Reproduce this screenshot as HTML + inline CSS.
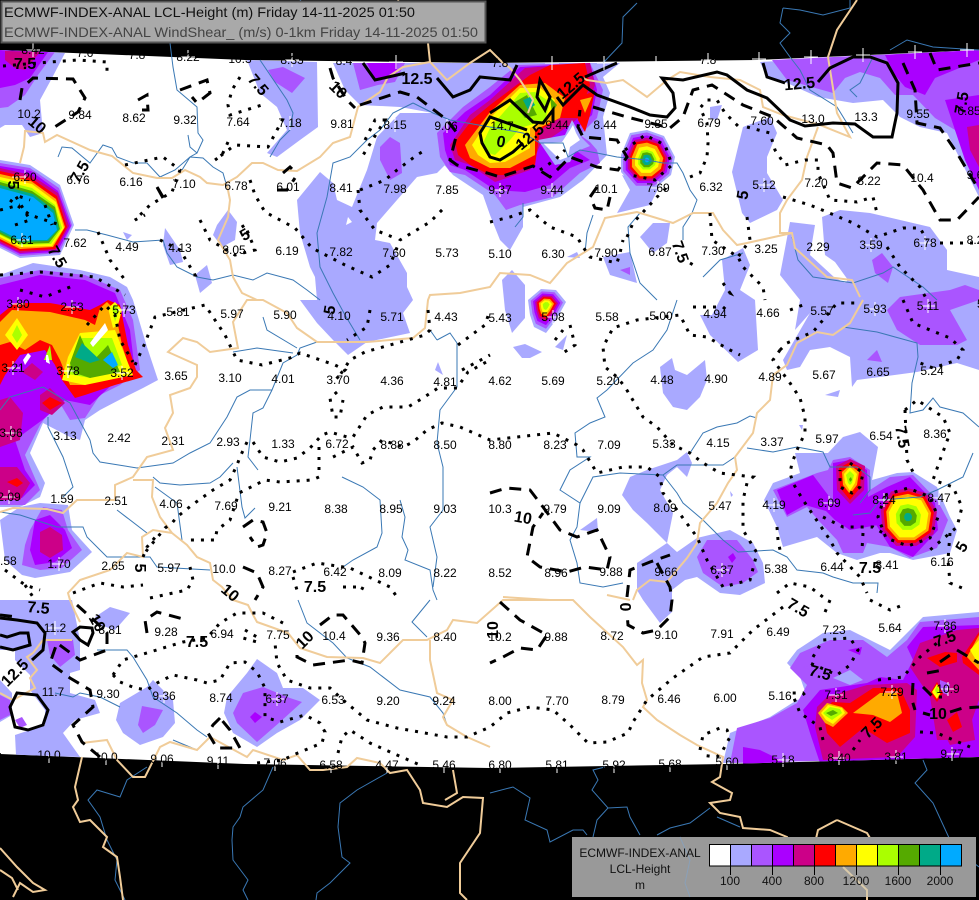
<!DOCTYPE html>
<html><head><meta charset="utf-8"><title>ECMWF-INDEX-ANAL LCL-Height</title>
<style>
html,body{margin:0;padding:0;background:#000;width:979px;height:900px;overflow:hidden}
svg{display:block}
text{font-family:"Liberation Sans",sans-serif}
.l text{font-size:12px;fill:#000;text-anchor:middle}
.b text{font-size:16px;font-weight:bold;fill:#000;text-anchor:middle}
.riv{fill:none;stroke:#3a78b4;stroke-width:1}
.bor{fill:none;stroke:#f0cc99;stroke-width:2}
.dot{fill:none;stroke:#000;stroke-width:3;stroke-dasharray:3 7}
.das{fill:none;stroke:#000;stroke-width:3;stroke-dasharray:12 8}
.sol{fill:none;stroke:#000;stroke-width:3}
</style></head><body>
<svg xmlns="http://www.w3.org/2000/svg" width="979" height="900" viewBox="0 0 979 900">
<defs>
<clipPath id="map"><polygon points="0,50 245,60 490,63 757,60 979,50 979,757 725,764 490,768 245,764 0,754"/></clipPath>
<polygon id="o1" points="-26,-5 -17,-27 0,-30 17,-24 28,-3 24,15 8,28 -12,28 -26,12"/>
<polygon id="o2" points="-18,-5 -5,-16 10,-15 20,-3 10,15 0,28 -12,22 -16,10"/>
<polygon id="o3" points="-32,-8 -20,-30 0,-34 22,-28 34,-6 30,20 10,34 -14,34 -30,16"/>
</defs>
<rect width="979" height="900" fill="#000"/>
<polygon points="0,50 245,60 490,63 757,60 979,50 979,757 725,764 490,768 245,764 0,754" fill="#fff"/>

<g clip-path="url(#map)">
<g fill="#a9a9ff">
<polygon points="0,50 65,53 52,78 40,100 43,133 30,137 22,125 5,125 0,128"/>
<polygon points="247,60 317,62 318,127 300,140 277,157 267,153 287,130 277,107 260,93"/>
<polygon points="297,200 320,172 333,183 337,200 352,207 367,170 377,137 400,113 440,113 445,165 437,173 417,177 377,223 375,240 390,243 407,273 407,287 413,300 403,313 410,333 367,342 348,355 333,340 317,323 300,300 317,300 315,277 310,267 300,233"/>
<polygon points="333,63 620,63 603,77 610,93 603,117 607,155 583,180 560,197 523,207 523,227 510,250 500,240 490,215 483,195 453,175 440,160 437,143 433,113 400,107 360,105 345,90"/>
<polygon points="165,228 180,250 183,262 170,265 163,245"/>
<polygon points="195,275 207,265 212,283 200,293"/>
<polygon points="217,225 228,210 237,222 235,240 222,247 213,235"/>
<polygon points="123,232 132,235 127,240"/>
<polygon points="438,362 443,375 435,370"/>
<polygon points="622,175 630,190 617,213 650,205 660,185"/>
<polygon points="743,127 770,117 777,133 767,157 767,173 783,200 777,210 750,223 742,213 732,172 738,147"/>
<polygon points="760,62 767,77 787,83 818,97 853,103 883,100 900,117 920,127 947,133 979,197 979,50"/>
<polygon points="710,107 722,105 717,120 710,118"/>
<polygon points="640,237 653,223 670,223 667,243 653,253"/>
<polygon points="567,257 577,252 580,258"/>
<polygon points="603,257 630,252 637,283 610,275"/>
<polygon points="822,217 840,210 870,213 930,227 947,250 947,270 979,277 979,370 957,363 917,372 857,380 852,387 850,357 830,347 810,350 800,367 787,370 783,360 810,313 837,290 848,280 835,262 825,255"/>
<polygon points="790,222 815,225 810,255 835,278 850,285 840,300 810,313 795,330 800,300 780,275"/>
<polygon points="722,260 743,248 750,265 740,290 755,300 758,350 738,362 710,335 700,315 712,315 725,290"/>
<polygon points="660,367 672,358 675,370 687,375 705,360 707,380 700,397 687,410 673,407 663,393"/>
<polygon points="502,280 512,270 525,285 525,318 512,333 505,310"/>
<polygon points="513,347 525,344 542,352 530,358 522,358"/>
<polygon points="555,347 567,335 563,350"/>
<polygon points="647,470 677,460 687,452 692,463 687,477 677,467 667,475 660,490 673,513 667,543 647,523 633,510 622,495 630,477"/>
<polygon points="637,563 667,543 677,552 697,538 730,530 753,543 763,563 765,583 740,595 720,593 697,577 685,580 672,590 672,612 660,623 643,600 637,590"/>
<polygon points="730,491 733,495 731,497"/>
<polygon points="799,425 803,425 802,430"/>
<polygon points="825,395 840,390 838,397"/>
<polygon points="580,530 597,518 598,532"/>
<polygon points="795,453 828,453 843,437 860,432 878,447 872,480 897,473 913,472 937,487 950,517 957,530 950,553 913,560 890,553 880,553 857,560 837,553 817,537 783,547 777,527 764,500 773,483 800,473"/>
<polygon points="787,663 797,650 823,633 850,630 890,650 923,617 979,612 979,757 723,763 730,733 770,717 797,700 807,697 800,677"/>
<polygon points="0,275 33,263 80,270 110,277 127,287 133,300 147,347 158,380 143,388 123,398 100,410 85,420 80,440 70,437 43,423 30,453 45,483 40,497 20,507 0,507"/>
<polygon points="40,503 68,505 72,530 92,552 70,572 35,578 22,575 5,560 0,520 20,507"/>
<polygon points="0,600 72,600 75,615 80,640 80,670 70,673 70,693 95,700 100,713 75,720 63,733 80,757 16,755 15,735 45,725 45,710 30,690 30,675 15,660 15,650 0,650"/>
<polygon points="0,680 12,693 12,715 0,722"/>
<polygon points="95,617 110,607 130,613 115,630 100,625"/>
<polygon points="153,680 173,700 175,723 163,737 140,745 123,733 116,720 120,703 147,687"/>
<polygon points="257,659 277,673 283,688 303,688 320,700 300,720 277,733 257,747 233,733 224,713 227,697 247,673"/>
<polygon points="0,160 30,165 60,185 74,225 60,255 20,258 0,248"/>
</g>
<g fill="#fff">
<polygon points="348,217 352,222 346,225"/>
<polygon points="15,275 22,283 28,289 10,289"/>
</g>
<g fill="#aa55ff">
<polygon points="0,50 55,52 38,75 25,95 8,107 0,108"/>
<polygon points="268,70 283,67 305,78 292,93 275,82"/>
<polygon points="380,147 390,137 400,143 402,173 390,180 380,160"/>
<polygon points="353,63 405,63 395,82 378,85 360,90"/>
<polygon points="440,157 437,133 463,107 490,87 517,65 590,63 603,90 597,118 580,135 590,142 597,150 600,163 580,173 553,197 520,205 506,210 495,195 465,175 450,172"/>
<polygon points="772,60 787,80 833,93 845,78 860,72 880,78 895,95 913,95 935,118 955,130 979,190 979,50"/>
<polygon points="620,270 630,267 630,275"/>
<polygon points="872,260 882,253 893,267 888,283 875,273"/>
<polygon points="887,310 900,297 950,290 965,285 979,290 979,300 950,310 967,340 957,345 920,345 897,330"/>
<polygon points="867,360 877,350 882,362"/>
<polygon points="0,278 40,270 85,275 120,290 133,320 140,370 120,385 100,395 85,418 70,420 58,400 40,425 25,455 40,490 25,505 0,505"/>
<polygon points="43,507 62,510 68,530 82,550 62,568 40,570 22,565 25,545 30,530"/>
<polygon points="47,640 73,640 75,655 60,667 50,655"/>
<polygon points="0,695 10,700 10,715 0,720"/>
<polygon points="15,720 22,717 27,725 20,728"/>
<polygon points="142,706 163,710 155,725 143,733 138,725"/>
<polygon points="263,687 290,698 302,702 280,722 257,742 237,723 233,713 243,693"/>
<polygon points="697,557 707,540 737,540 753,560 758,572 743,583 723,587 703,573"/>
<polygon points="773,490 817,473 828,470 833,460 850,457 870,470 870,490 890,477 913,475 937,500 948,520 937,548 910,558 890,547 867,543 863,553 843,553 837,540 818,520 807,507 787,517"/>
<polygon points="790,668 800,653 830,640 863,640 887,657 907,640 920,622 979,617 979,757 730,763 737,728 770,718 797,703 807,685"/>
<polygon points="0,163 30,168 59,188 72,225 59,253 20,256 0,246"/>
</g>
<polygon points="833,678 850,670 863,680 850,685" fill="#a9a9ff"/>
<g fill="#aa00ff">
<polygon points="0,50 48,52 30,78 15,85 0,88"/>
<polygon points="367,63 397,63 397,73 375,80"/>
<polygon points="445,150 443,133 465,112 490,95 520,67 590,63 597,90 592,115 575,130 565,135 555,142 575,150 590,160 570,168 550,185 525,192 495,190 465,170 450,165"/>
<polygon points="885,55 895,75 905,87 925,95 935,78 979,60 979,50"/>
<polygon points="945,100 979,95 979,190 965,160 955,130"/>
<polygon points="0,285 40,275 85,280 115,293 130,330 135,372 115,382 90,405 65,400 45,418 15,440 25,470 35,485 22,498 0,498"/>
<polygon points="35,520 50,515 65,530 72,548 55,562 35,565 30,550"/>
<polygon points="250,717 255,712 262,717 255,723"/>
<polygon points="728,557 733,553 736,558 732,563"/>
<polygon points="833,513 833,463 850,460 867,470 868,497 887,487 910,477 935,503 938,530 913,557 890,547 875,523 850,530 835,520"/>
<polygon points="777,490 813,475 828,495 833,513 805,505 787,515"/>
<polygon points="820,505 870,500 878,525 850,530 835,520"/>
<polygon points="803,710 820,690 867,683 880,677 903,680 913,660 907,647 923,627 979,625 979,757 820,763 810,733"/>
<polygon points="743,747 760,750 787,763 743,765"/>
<polygon points="0,166 31,171 58,191 71,226 57,252 20,254 0,244"/>
</g>
<g fill="#aa55ff"><polygon points="803,667 823,663 810,670"/></g>
<g fill="#aa00ff"><polygon points="848,650 862,647 860,655"/></g>
<g fill="#cc0088">
<polygon points="5,51 40,52 25,70 15,68 5,60"/>
<polygon points="450,145 470,115 490,100 525,68 590,63 595,85 585,112 570,125 540,145 530,170 495,182 470,165 455,160"/>
<polygon points="967,127 979,125 979,167 970,150"/>
<polygon points="0,400 10,397 23,413 20,440 0,447"/>
<polygon points="0,467 17,467 30,483 20,500 0,500"/>
<polygon points="22,372 32,363 43,372 35,380"/>
<polygon points="40,532 50,527 62,535 63,550 50,558 40,552"/>
<polygon points="817,707 827,697 867,685 907,683 917,690 915,737 897,757 823,760 815,727"/>
<polygon points="920,643 957,630 979,628 979,700 965,740 937,740 930,697 910,667"/>
<polygon points="0,168 31,175 58,193 69,226 56,250 20,253 0,243"/>
<polygon points="40,395 50,388 65,403 52,415 40,410"/>
</g>
<polygon points="940,680 950,684 948,695 940,692" fill="#aa55ff"/>
<polygon points="950,700 970,705 975,740 950,745 940,725" fill="#cc0088"/>
<g fill="#f00">
<polygon points="455,142 472,120 490,105 530,75 550,65 585,63 590,85 578,118 560,118 540,130 535,165 505,175 490,175 470,165 458,155"/>
<polygon points="575,100 595,90 590,115 585,132 578,120"/>
<polygon points="0,315 15,303 50,303 90,310 100,305 108,300 120,305 128,345 136,370 143,377 115,385 85,395 75,398 62,380 55,365 45,350 20,355 5,375 0,385"/>
<polygon points="42,403 50,397 62,403 50,410"/>
<polygon points="823,713 832,702 850,703 873,688 900,688 910,710 910,733 887,743 863,728 840,747 827,733"/>
<polygon points="927,658 945,652 957,653 957,662 940,667"/>
<polygon points="962,657 979,632 979,675 963,663"/>
<polygon points="947,720 957,712 962,727 953,732"/>
<polygon points="930,693 937,682 943,693 937,702"/>
<polygon points="0,171 31,178 57,196 67,227 55,249 20,251 0,241"/>
</g>
<g fill="#fa0">
<polygon points="465,145 490,112 520,85 545,83 565,98 560,118 535,130 535,155 510,168 490,168 470,158"/>
<polygon points="580,100 592,97 585,113"/>
<polygon points="0,322 12,310 50,312 85,320 95,325 100,308 107,302 115,310 122,345 130,370 85,385 70,385 60,360 52,345 40,340 25,350 10,342 0,345"/>
<polygon points="853,713 880,693 897,693 902,713 890,722 873,715"/>
<polygon points="818,713 827,703 842,707 848,713 833,727 825,723"/>
<polygon points="967,657 979,635 979,670"/>
<polygon points="0,174 31,181 56,199 65,227 53,247 20,249 0,239"/>
</g>
<g fill="#ff0">
<polygon points="472,145 490,118 520,88 540,88 555,100 548,120 530,128 530,148 505,162 490,163 478,155"/>
<polygon points="5,335 17,318 28,335 17,350"/>
<polygon points="68,357 80,333 115,330 128,363 133,375 85,385 62,380"/>
<polygon points="108,308 115,302 122,310 118,325 113,328"/>
<polygon points="821,713 828,705 842,708 845,713 833,724 826,720"/>
<polygon points="970,650 979,640 979,665"/>
<polygon points="932,692 937,684 941,692 937,699"/>
<polygon points="0,177 32,184 56,202 64,228 52,246 20,247 0,237"/>
</g>
<g fill="#af0">
<polygon points="483,143 490,128 510,105 520,93 535,92 550,102 545,120 530,125 520,128 510,140 495,155 485,152"/>
<polygon points="12,335 17,325 22,335 17,343"/>
<polygon points="72,358 82,338 112,338 122,365 90,378 68,374"/>
<polygon points="112,308 115,304 119,310 115,322"/>
<polygon points="44,360 50,345 52,360"/>
<polygon points="823,713 830,707 840,709 842,713 832,720 826,716"/>
<polygon points="935,690 937,686 939,690 937,695"/>
<polygon points="0,180 32,188 55,205 62,228 51,244 20,245 0,235"/>
</g>
<g fill="#5a0">
<polygon points="513,103 527,95 537,115 525,118"/>
<polygon points="550,97 557,105 552,113"/>
<polygon points="70,363 80,335 92,362 108,345 120,372 90,378 72,372"/>
<polygon points="826,713 833,710 838,713 831,716"/>
<polygon points="0,182 32,191 55,207 60,229 49,243 20,244 0,234"/>
</g>
<g fill="#0a8">
<polygon points="523,100 530,97 535,105 528,110"/>
<polygon points="75,357 82,343 100,360 90,363"/>
<polygon points="0,185 33,194 54,210 59,229 48,241 20,242 0,232"/>
</g>
<g fill="#0af">
<polygon points="103,360 112,352 118,365 113,368"/>
<polygon points="0,188 33,197 53,213 57,230 47,240 20,240 0,230"/>
</g>
<polygon points="90,343 105,323 108,330 93,347" fill="#fff"/>
<polygon points="23,360 28,353 31,356 25,365" fill="#fff"/>
<polygon points="46,355 48,355 50,364 46,362" fill="#fff"/>
<polygon points="538,140 565,135 572,120 582,138 590,146 575,152 570,162 555,165" fill="#a9a9ff"/>
<polygon points="543,143 562,142 570,130 573,125 576,133 580,140 570,147 568,157 560,160" fill="#fff"/>

<g transform="translate(647,160)">
<use href="#o1" fill="#a9a9ff"/><use href="#o1" fill="#aa55ff" transform="scale(.92)"/><use href="#o1" fill="#aa00ff" transform="scale(.82)"/><use href="#o1" fill="#c08" transform="scale(.74)"/><use href="#o1" fill="#f00" transform="scale(.66)"/><use href="#o1" fill="#fa0" transform="scale(.58)"/><use href="#o1" fill="#ff0" transform="scale(.46)"/><use href="#o1" fill="#af0" transform="scale(.34)"/><use href="#o1" fill="#5a0" transform="scale(.26)"/><use href="#o1" fill="#0a8" transform="scale(.18)"/><use href="#o1" fill="#0af" transform="scale(.08)"/>
</g>
<g transform="translate(546,305)">
<use href="#o2" fill="#a9a9ff"/><use href="#o2" fill="#aa55ff" transform="scale(.85)"/><use href="#o2" fill="#aa00ff" transform="scale(.72)"/><use href="#o2" fill="#c08" transform="scale(.6)"/><use href="#o2" fill="#f00" transform="scale(.5)"/><use href="#o2" fill="#fa0" transform="scale(.4)"/><use href="#o2" fill="#ff0" transform="scale(.3)"/><use href="#o2" fill="#af0" transform="scale(.18)"/>
</g>
<g transform="translate(850,480)">
<polygon fill="#c08" points="-14,-14 0,-21 15,-14 14,10 0,24 -13,10"/>
<polygon fill="#f00" points="-11,-12 0,-18 12,-12 10,8 0,20 -10,8"/>
<polygon fill="#fa0" points="-8,-8 0,-15 9,-8 7,5 0,14 -7,5"/>
<polygon fill="#ff0" points="-6,-6 0,-13 7,-6 5,3 0,11 -5,3"/>
<polygon fill="#af0" points="-4,-5 0,-9 4,-5 2,3 0,5 -2,3"/>
<polygon fill="#5a0" points="-1,-1 1,-3 2,0 0,2"/>
</g>
<g transform="translate(908,517)">
<use href="#o3" fill="#c08" transform="scale(.85)"/><use href="#o3" fill="#f00" transform="scale(.76)"/><use href="#o3" fill="#fa0" transform="scale(.68)"/><use href="#o3" fill="#ff0" transform="scale(.6)"/><use href="#o3" fill="#af0" transform="scale(.38)"/><use href="#o3" fill="#5a0" transform="scale(.26)"/><use href="#o3" fill="#0a8" transform="scale(.12)"/>
</g>
<polygon points="0,468 12,470 30,483 20,500 0,500" fill="#cc0088"/>
<polygon points="7,482 17,478 23,483 17,487" fill="#f00"/>
</g>

<g class="riv">
<path d="M300 0L330 25L400 43M170 43L173 67L177 90L197 107L198 133L203 140L197 153L190 157L182 170M188 135L190 147L197 153"/>
<path d="M58 157L62 147L72 148L90 163L103 145L112 148L117 157L133 163L147 163L160 177L175 170L190 157L203 158L213 167L223 173L227 187L230 200"/>
<path d="M75 230L87 230L107 235L133 242L163 240L167 253L177 267L197 277L213 280L233 275L253 280L267 273L293 280L307 290L320 300"/>
<path d="M413 103L393 113L380 130L367 140L350 157L333 163L327 197L317 233L320 267L333 293L345 315L360 340"/>
<path d="M260 60L287 100L293 113L290 130L280 140L270 157"/>
<path d="M413 103L433 113L450 120L490 127L523 133L540 143L563 143L568 157L580 150L597 153L617 157L647 160L663 163L677 163L683 173L690 190L697 200L692 213L683 227L683 240"/>
<path d="M523 203L523 217L515 227M593 215L587 233L585 253M640 213L628 227L630 253L640 283L657 300"/>
<path d="M637 3L623 17L622 43L603 63M783 8L780 23L790 33L780 43L790 57L800 70L810 90L837 107L853 133M850 0L850 8L823 15L800 10L783 8M890 50L907 40L933 47L979 50M873 57L860 83L850 90L857 97"/>
<path d="M792 237L798 260L813 277L853 283L883 273L893 267L923 287L937 300M703 277L720 260L743 253"/>
<path d="M843 327L877 332L917 343L918 357L912 383L910 413L923 410L933 398L940 407L963 413L979 427"/>
<path d="M747 448L773 452L797 447L823 452L830 467L857 467L870 477L870 490L860 503M853 515L870 513L880 500L920 497L937 490L963 477L973 453"/>
<path d="M735 457L723 465L677 465L663 475L620 473L593 477L580 503L560 490L570 470L590 457L577 457L575 433L590 423L605 417L597 398L607 390L633 363L653 350L667 330L677 300"/>
<path d="M690 453L703 433L717 427L737 423L750 416L757 418"/>
<path d="M663 475L677 493L683 503L703 520L723 540L738 552L773 550L787 557L797 570L823 573L833 577L853 583L878 583L877 593"/>
<path d="M580 503L577 527L570 540L577 563L580 583L603 587L623 583M342 477L363 487L380 500L382 533L377 547L353 560L343 567M400 500L405 517L402 537L408 550L405 560L430 570L433 590L437 600"/>
<path d="M437 340L430 330M457 343L450 333L437 340M457 343L457 387L440 410L437 443L443 467L443 510L430 527L437 557L433 587"/>
<path d="M272 390L250 390L237 397L227 417L210 443L190 453L173 463L137 468L100 462L93 453L90 440L70 403L43 387L10 397L0 410M48 417L48 427L63 457L73 487L63 497"/>
<path d="M272 390L283 363L297 355L300 348L317 342M233 352L257 348L293 353M263 317L267 330L297 348M272 390L263 408L253 413L250 440L248 457L258 470"/>
<path d="M233 463L220 477L210 483L180 485L160 483L153 477M237 467L242 507L245 518L255 508M155 487L177 503L182 540M117 510L147 533M0 512L20 515L57 527L83 527L87 537L107 557L150 557L157 567L210 570"/>
<path d="M298 600L307 623L333 643L347 658L370 667L400 690L430 697L443 713L447 725M430 600L412 622L427 637M97 650L127 650L133 657L147 680L153 697L177 713L197 730L207 737M173 740L197 750M55 693L73 697L80 693L100 697L120 707"/>
<path d="M147 767L127 780L120 797L97 790L88 800L100 817L107 840L117 860L115 880L125 900M273 767L263 790L243 807L240 817L233 827L232 840L233 860L248 880L243 890L248 900M387 773L357 790L340 803L338 827L342 857L350 863L340 873L330 883L317 893L316 900"/>
<path d="M605 767L593 770L598 780L592 790L608 808L627 807L630 817L640 835M608 808L597 820L593 837M710 808L690 823L670 828L657 835M490 793L513 787L530 798L525 820L547 830L550 842L573 830L583 830L587 835M923 760L927 770L915 783L933 803L950 840L970 860L979 867M717 817L740 827"/>
</g>

<g class="bor">
<path d="M20 163L24 147L25 131L43 133L45 142L57 135L90 150L112 156L133 173L157 178L172 178L185 170L200 177L207 183L223 185L237 177L252 163L263 163L278 170L297 171L320 157L333 143L350 137L358 107L380 92L388 77L403 67L430 62L447 80L470 63L490 50L503 63L510 68L520 80L533 100L528 113"/>
<path d="M398 0L403 17L428 43L430 62M583 78L587 80L607 83L623 80L647 97L667 80L680 72L710 77L740 80L760 90L763 107L783 115L820 125L850 137L837 113L828 57L837 30L857 0"/>
<path d="M818 127L807 157L802 180L787 200L780 213L780 233L792 233L795 248L827 277L852 280L860 297"/>
<path d="M792 233L747 243L737 245L723 230L713 213L693 213L673 223L637 212L605 218L593 247L567 263L550 283L530 275L500 273L490 287L460 293L430 295L428 300L425 328L413 338L367 342L317 342L297 328L287 313L263 300L257 300L242 293L233 277L230 260L218 240L228 217L230 200L227 185"/>
<path d="M263 300L247 300L233 322L238 348L210 352L197 342L183 338L168 352L197 365L197 377L190 388L170 395L173 413L165 428L173 450L147 457L133 477L115 485L115 500L77 500L63 513L47 509L13 508L0 512"/>
<path d="M133 480L153 480L152 497L160 517L172 533L153 530L142 537L143 557L127 553L110 570L80 580L68 593L70 600L75 612L80 622M172 533L187 545L197 557L210 563L213 580L222 587L233 600L248 605L252 613L257 622L288 633L300 648L327 657L363 658L380 663L403 640L427 640L447 630L453 620L477 623L503 600L527 600L573 600L590 617L623 647L637 665L643 660L642 683L647 700L643 707L657 720L680 735L697 745L723 757L720 777L712 782L732 793L730 800L710 803L720 813L740 817L743 828L770 830L787 837L787 843M837 820L818 830L815 843M843 867L867 890L867 900M837 820L867 833L873 843"/>
<path d="M430 640L430 660L437 693L453 700L443 717L447 725L467 737L490 747"/>
<path d="M33 653L27 657L37 670L30 678L35 688L13 700L0 693M43 640L72 640M43 640L33 653"/>
<path d="M82 743L107 740L117 760L133 777L145 777L160 747L170 742L197 750L210 737L247 757L253 750L283 760L297 755L310 770L323 770L347 767L357 758L380 763L390 773L407 770L420 790L423 803L447 807L463 797L483 798L480 833L460 863L460 893L467 900"/>
<path d="M82 757L75 787L78 800L73 807L80 822L90 820L107 837L103 847L117 857L120 877L123 900M453 770L457 793L445 800M0 848L17 867L33 883L45 890L33 892L20 883L13 897M0 870L12 878L18 890"/>
<path d="M863 300L850 323L833 335L817 332L797 343L787 365L773 375L770 400L757 413L753 433L735 457L737 470L728 483L717 503L700 523L697 543L687 558L667 582L650 580L637 590L633 600M503 597L550 600M607 595L630 600"/>
</g>

<g class="dot">
<path d="M3 66L50 62L78 60L107 62L107 72M240 77L232 90L228 105L230 115L262 105M228 142L222 155L215 160L235 145L268 147L285 115M125 165L163 157L180 170L172 192L150 205L135 220L145 215"/>
<path d="M250 180L255 195L265 212L295 228L312 248L345 265L372 277L390 265L400 240L430 222L445 207M358 190L360 210L375 230L395 238M360 190L385 180L397 170L417 155L422 152M365 140L375 120L385 120L360 160"/>
<path d="M200 220L210 240L235 255L255 250L245 225L237 230M98 232L110 260L125 280M160 240L180 250L195 275L190 275M0 275L40 272L95 277L125 295M10 200L30 215L60 225"/>
<path d="M87 325L105 305L115 315L120 340L133 362M135 365L145 343L155 317L205 305L225 335L237 360L262 365L290 358L300 353L335 365L345 370L335 380M20 290L45 297L75 285"/>
<path d="M458 345L485 325L490 310M462 370L490 355M428 310L430 330L425 335L390 345L365 352L350 360L340 375M337 392L330 398L333 417L340 417L343 400"/>
<path d="M247 442L240 457L237 465L230 480L213 490L192 505L177 517L172 523L165 528L147 550L143 557"/>
<path d="M253 442L263 457L280 462L297 458L310 448L322 435L330 432L347 437L353 437L362 423L367 415L383 407L408 407L423 398L438 388L457 388L468 372L490 360M319 447L319 477L312 480L280 482L265 480L245 490L239 493L230 520L217 530L215 540L190 540"/>
<path d="M333 457L353 447L362 463L370 460L373 450L382 440L403 447L413 442L427 430L442 423L460 427L483 437L490 440L553 433L577 445L583 450L597 473L623 467L647 467L660 477L663 493L677 510L697 537L707 560L723 587L750 580L757 553L743 530L743 500L747 483L753 477L720 473L703 463L690 453L673 445L657 427L643 417L625 387L617 377L605 367L603 347L613 328L637 320L680 315L690 335L707 337L730 350L740 355"/>
<path d="M693 307L723 307L730 313M780 350L773 360L790 383L800 398L805 417L805 433L797 450L792 463L790 473L793 483L803 500L830 540L837 553L860 577L867 593M780 350L787 343L813 332L837 303L857 303M790 310L803 305"/>
<path d="M903 300L913 323L930 330L950 338L963 350L957 360L933 368L920 363M905 410L917 400L943 417L950 433L940 460L933 480L953 487L962 507L957 527L930 550M950 533L948 560L950 583L967 590M905 410L907 460L913 472"/>
<path d="M850 463L863 473L860 487L852 493L840 487L840 470M823 517L843 527L873 527L883 533M863 533L862 550M777 527L778 540L780 550M777 593L790 583L810 587L823 597"/>
<path d="M885 495L908 488L930 497L938 517L930 538L908 546L886 538L878 517Z"/>
<path d="M783 607L753 630L730 653L703 657L673 678L647 700L633 722L628 733L607 742L588 743L570 725L553 710L530 707L507 713L490 727L467 737L447 737L397 728L367 720L343 700L330 688L310 688L287 680L277 663L275 643M830 600L823 617M870 600L890 610L903 605"/>
<path d="M700 750L703 735L720 728L727 730L730 737L723 750L717 757L700 755M823 740L820 727L800 713L792 693L803 693L807 698M813 657L823 640L850 638L858 650L850 665L837 675L810 663M878 680L903 677L920 657L937 643M853 750L860 740M920 732L937 733L970 747"/>
<path d="M113 675L120 682L135 688L147 690L157 683L173 675L197 680L207 683L220 680L230 663L245 662L257 672L265 688L265 717L280 722L305 715L320 723L325 732L322 743L293 755L283 760L257 763M113 675L123 660L140 655L183 642L207 638L220 623L237 613L263 613L283 623M245 630L257 637L257 642L243 638M338 753L342 737L350 730L370 743L397 755L420 765"/>
<path d="M143 557L147 547L157 535M73 593L100 583L123 587L143 585M150 598L187 590L193 580L190 567M293 572L317 563L350 568L390 587L397 597M293 577L297 590M343 587L363 587L360 593M370 310L367 327L347 340M5 570L25 585L40 590M25 585L35 600"/>
<path d="M490 222L510 217L530 210L550 227L577 237L583 247L590 257L617 263L620 253L623 240M627 237L633 223L657 197L667 187M690 177L700 173L707 157L708 143L707 123L700 108L707 100L717 100L725 113L740 128M747 127L770 133L775 150L785 165L805 160L818 160L818 173L830 200L857 202L873 197L877 213"/>
<path d="M783 197L810 205L827 212L853 223L877 237L903 228L920 228L927 240M887 247L900 267L920 287L927 300M940 243L979 243M690 263L695 266M710 213L712 240L738 257L743 267L763 287L765 300M747 217L750 240L738 257M723 283L730 293L723 290"/>
<path d="M540 170L555 160L565 150M625 150L645 135L665 145L672 165L655 180L630 175"/>
<path d="M0 210L20 205M15 225L30 220L15 195L30 200M45 205L52 225M555 340L563 330M570 325L575 345L560 355"/>
</g>

<g class="das">
<path d="M360 105L400 92L417 97L447 120L457 133L450 160L457 165L487 173L500 177L533 166L550 177L570 157L597 167L618 170L627 157L617 140L583 137L578 127L580 110M593 107L627 117L670 128L683 117L693 90L712 85L743 105L773 117L797 138L827 145L833 153L837 183L852 188L877 163L903 165L923 190L940 220L957 220L979 197"/>
<path d="M903 63L915 90L917 123L940 128L957 153L979 190M930 53L937 70L979 63M597 187L590 197L595 208L607 210L610 197"/>
<path d="M20 100L22 88L33 78L73 79L85 98L78 112L50 130M330 68L333 78L347 100L355 108M138 100L147 95L148 110L142 110M180 90L207 80L210 93L197 103L192 97M283 173L290 167L295 172M277 190L287 190L295 178M157 187L163 197"/>
<path d="M243 527L253 520L263 522L267 533L263 545L257 547L250 537M243 567L257 573L263 587L255 600"/>
<path d="M490 493L507 488L530 490L543 507L560 530L577 537L597 530L610 557L607 570L585 567L567 572L540 567L527 557L533 527L543 513M627 597L630 570L650 562L670 555M657 563L670 587L672 600L670 617L657 630L643 633L628 625L627 613"/>
<path d="M500 602L520 620L547 635L537 650L520 648L503 657L490 663M147 633L145 620L157 612L187 620M320 625L333 615L343 615L362 637L365 643L362 663L350 660L313 665L297 657L297 650M220 718L213 725L208 733L217 748L240 748L230 730L220 718"/>
<path d="M77 605L97 623L107 633L107 650L80 660L57 643L50 663L70 678L90 690L93 707L73 725L82 742L100 757M0 615L17 617"/>
<path d="M940 662L950 655M957 650L979 663M927 673L943 670M913 683L912 700L915 710M923 687L933 697L942 697M923 713L930 715M950 712L963 708L979 707M163 198L157 187"/>
</g>

<g class="sol">
<path d="M363 63L375 80L397 75L405 73M437 78L453 97L470 90L480 77L490 78L510 80L517 65"/>
<path d="M537 97L540 80L550 97L545 110Z"/>
<path d="M490 113L510 100L533 122L543 123L553 110L553 123M527 130L490 117L480 133L482 143L490 157L500 160L513 152L523 143"/>
<path d="M557 97L563 105L583 85L597 95L630 107L650 115L667 117L675 108L673 93L662 78L683 80L717 72L727 75L747 90L767 98L790 120L805 126L833 123L855 124L873 137L892 137L897 113L898 83L887 63L870 57L853 57L830 68L818 82"/>
<path d="M763 63L767 77L785 83M585 77L617 63"/>
<path d="M0 618L17 620L37 623L45 633L43 650L32 660M0 647L13 650L30 645L28 633L20 633L7 637L0 635"/>
<path d="M17 693L37 695L48 710L43 725L28 730L15 727L10 707Z"/>
<path d="M73 632L80 627L92 628L93 633L88 645L80 640Z"/>
</g>

<g class="b">
<text transform="translate(25,69)">7.5</text>
<text transform="translate(258,85) rotate(50) translate(0,5)">7.5</text>
<text transform="translate(37,125) rotate(40) translate(0,5)">10</text>
<text transform="translate(338,90) rotate(45) translate(0,5)">10</text>
<text transform="translate(417,84)">12.5</text>
<text transform="translate(80,172) rotate(-60) translate(0,5)">7.5</text>
<text transform="translate(13,185) rotate(90) translate(0,5)">5</text>
<text transform="translate(57,257) rotate(60) translate(0,5)">7.5</text>
<text transform="translate(245,235) rotate(-30) translate(0,5)">5</text>
<text transform="translate(330,310) rotate(-80) translate(0,5)">5</text>
<text transform="translate(743,195) rotate(-80) translate(0,5)">5</text>
<text transform="translate(680,252) rotate(70) translate(0,5)">7.5</text>
<text transform="translate(902,437) rotate(80) translate(0,5)">7.5</text>
<text transform="translate(870,573)">7.5</text>
<text transform="translate(962,547) rotate(-60) translate(0,5)">5</text>
<text transform="translate(800,89) rotate(-5)">12.5</text>
<text transform="translate(571,86) rotate(-40) translate(0,5)">12.5</text>
<text transform="translate(530,137) rotate(-40) translate(0,5)">12.5</text>
<text transform="translate(962,103) rotate(-80) translate(0,5)">7.5</text>
<text transform="translate(523,518) rotate(10) translate(0,5)">10</text>
<text transform="translate(140,568) rotate(90) translate(0,5)">5</text>
<text transform="translate(230,593) rotate(40) translate(0,5)">10</text>
<text transform="translate(315,592)">7.5</text>
<text transform="translate(38,613) rotate(5)">7.5</text>
<text transform="translate(15,673) rotate(-45) translate(0,5)">12.5</text>
<text transform="translate(97,623) rotate(60) translate(0,5)">10</text>
<text transform="translate(197,647)">7.5</text>
<text transform="translate(305,640) rotate(-45) translate(0,5)">10</text>
<text transform="translate(798,608) rotate(30) translate(0,5)">7.5</text>
<text transform="translate(625,607) rotate(90) translate(0,5)">0</text>
<text transform="translate(493,630) rotate(-90) translate(0,5)">10</text>
<text transform="translate(820,673) rotate(15) translate(0,5)">7.5</text>
<text transform="translate(872,728) rotate(-45) translate(0,5)">7.5</text>
<text transform="translate(945,639) rotate(-20) translate(0,5)">7.5</text>
<text transform="translate(938,719)">10</text>
<text transform="translate(501,142) rotate(10) translate(0,5)">0</text>
</g>

<path fill="none" stroke="#fff" stroke-width="1" d="M26 50h14M33 43v14M181 57h14M188 50v14M285 60h14M292 53v14M389 62h14M396 55v14M545 63h14M552 56v14M597 63h14M604 56v14M649 63h14M656 56v14M701 60h14M708 53v14M752 59h14M759 52v14M804 57h14M811 50v14M856 55h14M863 48v14M908 52h14M915 45v14M960 50h14M967 43v14M395 118v14M290 116v14M447 119v14M12 177h14M25 170v14M15 240h14M22 233v14M11 304h14M18 297v14M65 307h14M72 300v14M117 310h14M124 303v14M61 371h14M68 364v14M115 373h14M122 366v14M6 368h14M13 361v14M4 433h14M11 426v14M2 497h14M9 490v14M52 564h14M59 557v14M493 190h14M500 183v14M545 190h14M552 183v14M651 188h14M658 181v14M546 317h14M553 310v14M757 185h14M764 178v14M864 245h14M871 238v14M918 243h14M925 236v14M921 306h14M928 299v14M868 309h14M875 302v14M767 505h14M774 498v14M822 503h14M829 496v14M877 500h14M884 493v14M932 498h14M939 491v14M715 570h14M722 563v14M48 628h14M55 621v14M270 699h14M277 692v14M157 696h14M164 689v14M829 695h14M836 688v14M885 692h14M892 685v14M941 689h14M948 682v14M938 626h14M945 619v14M49 755v8M106 757v8M162 759v8M218 761v8M275 763v8M331 765v8M387 765v8M444 765v8M500 765v8M557 765v8M614 765v8M670 764v8M727 762v8M776 760h14M783 753v14M832 758h14M839 751v14M889 757h14M896 750v14M945 754h14M952 747v14"/>

<g class="l">
<text x="29" y="118">10.2</text><text x="80" y="119">9.84</text><text x="134" y="122">8.62</text><text x="185" y="124">9.32</text><text x="238" y="126">7.64</text><text x="290" y="127">7.18</text><text x="342" y="128">9.81</text><text x="395" y="129">8.15</text><text x="446" y="130">9.06</text><text x="502" y="130">14.7</text><text x="557" y="129">9.44</text><text x="605" y="129">8.44</text><text x="656" y="128">9.85</text><text x="709" y="127">6.79</text><text x="762" y="125">7.60</text><text x="813" y="123">13.0</text><text x="866" y="121">13.3</text><text x="918" y="118">9.55</text><text x="969" y="115">6.85</text>
<text x="25" y="181">6.20</text><text x="78" y="184">6.76</text><text x="131" y="186">6.16</text><text x="184" y="188">7.10</text><text x="236" y="190">6.78</text><text x="288" y="191">6.01</text><text x="341" y="192">8.41</text><text x="395" y="193">7.98</text><text x="447" y="194">7.85</text><text x="500" y="194">9.37</text><text x="552" y="194">9.44</text><text x="606" y="193">10.1</text><text x="658" y="192">7.69</text><text x="711" y="191">6.32</text><text x="764" y="189">5.12</text><text x="816" y="187">7.20</text><text x="869" y="185">8.22</text><text x="922" y="182">10.4</text><text x="975" y="179">9.6</text>
<text x="22" y="244">6.61</text><text x="75" y="247">7.62</text><text x="127" y="251">4.49</text><text x="180" y="252">4.13</text><text x="234" y="254">8.05</text><text x="287" y="255">6.19</text><text x="341" y="256">7.82</text><text x="394" y="257">7.60</text><text x="447" y="257">5.73</text><text x="500" y="258">5.10</text><text x="553" y="258">6.30</text><text x="606" y="257">7.90</text><text x="660" y="256">6.87</text><text x="713" y="255">7.30</text><text x="766" y="253">3.25</text><text x="818" y="251">2.29</text><text x="871" y="249">3.59</text><text x="925" y="247">6.78</text><text x="975" y="244">8.2</text>
<text x="18" y="308">3.80</text><text x="72" y="311">2.53</text><text x="124" y="314">5.73</text><text x="178" y="316">5.81</text><text x="232" y="318">5.97</text><text x="285" y="319">5.90</text><text x="339" y="320">4.10</text><text x="392" y="321">5.71</text><text x="446" y="321">4.43</text><text x="500" y="322">5.43</text><text x="553" y="321">5.08</text><text x="607" y="321">5.58</text><text x="661" y="320">5.00</text><text x="715" y="318">4.94</text><text x="768" y="317">4.66</text><text x="822" y="315">5.57</text><text x="875" y="313">5.93</text><text x="928" y="310">5.11</text><text x="982" y="308">5.</text>
<text x="13" y="372">3.21</text><text x="68" y="375">3.78</text><text x="122" y="377">3.52</text><text x="176" y="380">3.65</text><text x="230" y="382">3.10</text><text x="283" y="383">4.01</text><text x="338" y="384">3.70</text><text x="392" y="385">4.36</text><text x="445" y="386">4.81</text><text x="500" y="385">4.62</text><text x="553" y="385">5.69</text><text x="608" y="385">5.20</text><text x="662" y="384">4.48</text><text x="716" y="383">4.90</text><text x="770" y="381">4.89</text><text x="824" y="379">5.67</text><text x="878" y="376">6.65</text><text x="932" y="375">5.24</text><text x="984" y="372">5</text>
<text x="11" y="437">3.06</text><text x="65" y="440">3.13</text><text x="119" y="442">2.42</text><text x="173" y="445">2.31</text><text x="228" y="446">2.93</text><text x="283" y="448">1.33</text><text x="337" y="448">6.72</text><text x="392" y="449">8.88</text><text x="445" y="449">8.50</text><text x="500" y="449">8.80</text><text x="555" y="449">8.23</text><text x="609" y="449">7.09</text><text x="664" y="448">5.33</text><text x="718" y="447">4.15</text><text x="772" y="446">3.37</text><text x="827" y="443">5.97</text><text x="881" y="440">6.54</text><text x="935" y="438">8.36</text>
<text x="9" y="501">2.09</text><text x="62" y="503">1.59</text><text x="116" y="505">2.51</text><text x="171" y="508">4.06</text><text x="226" y="510">7.69</text><text x="280" y="511">9.21</text><text x="336" y="513">8.38</text><text x="391" y="513">8.95</text><text x="445" y="513">9.03</text><text x="500" y="513">10.3</text><text x="555" y="513">9.79</text><text x="609" y="513">9.09</text><text x="665" y="512">8.09</text><text x="720" y="510">5.47</text><text x="774" y="509">4.19</text><text x="829" y="507">6.09</text><text x="884" y="504">8.24</text><text x="939" y="502">8.47</text>
<text x="5" y="565">1.58</text><text x="59" y="568">1.70</text><text x="113" y="570">2.65</text><text x="169" y="572">5.97</text><text x="224" y="573">10.0</text><text x="280" y="575">8.27</text><text x="335" y="576">6.42</text><text x="390" y="577">8.09</text><text x="445" y="577">8.22</text><text x="500" y="577">8.52</text><text x="556" y="577">8.96</text><text x="611" y="576">9.88</text><text x="666" y="576">9.66</text><text x="722" y="574">6.37</text><text x="776" y="573">5.38</text><text x="832" y="571">6.44</text><text x="887" y="569">8.41</text><text x="942" y="566">6.16</text>
<text x="55" y="632">11.2</text><text x="110" y="634">8.81</text><text x="166" y="636">9.28</text><text x="222" y="638">6.94</text><text x="278" y="639">7.75</text><text x="334" y="640">10.4</text><text x="388" y="641">9.36</text><text x="445" y="641">8.40</text><text x="500" y="641">10.2</text><text x="556" y="641">9.88</text><text x="612" y="640">8.72</text><text x="666" y="639">9.10</text><text x="722" y="638">7.91</text><text x="778" y="636">6.49</text><text x="834" y="634">7.23</text><text x="890" y="632">5.64</text><text x="945" y="630">7.86</text>
<text x="53" y="696">11.7</text><text x="108" y="698">9.30</text><text x="164" y="700">9.36</text><text x="221" y="702">8.74</text><text x="277" y="703">6.37</text><text x="333" y="704">6.53</text><text x="388" y="705">9.20</text><text x="444" y="705">9.24</text><text x="500" y="705">8.00</text><text x="557" y="705">7.70</text><text x="613" y="704">8.79</text><text x="669" y="703">6.46</text><text x="725" y="702">6.00</text><text x="780" y="700">5.16</text><text x="836" y="699">7.51</text><text x="892" y="696">7.29</text><text x="948" y="693">10.9</text>
<text x="-2" y="756">4</text><text x="49" y="759">10.0</text><text x="106" y="761">10.0</text><text x="162" y="763">9.06</text><text x="218" y="765">9.11</text><text x="275" y="767">7.06</text><text x="331" y="769">6.58</text><text x="387" y="769">4.47</text><text x="444" y="769">5.46</text><text x="500" y="769">6.80</text><text x="557" y="769">5.81</text><text x="614" y="769">5.92</text><text x="670" y="768">5.68</text><text x="727" y="766">5.60</text><text x="783" y="764">5.18</text><text x="839" y="762">8.40</text><text x="896" y="761">3.81</text><text x="952" y="758">9.77</text>
<text x="33" y="54">8.42</text><text x="85" y="57">7.6</text><text x="137" y="59">7.8</text><text x="188" y="61">8.22</text><text x="240" y="63">10.3</text><text x="292" y="64">8.33</text><text x="344" y="65">8.4</text><text x="500" y="67">7.8</text><text x="708" y="64">7.8</text>
</g>

<rect x="1.5" y="1.5" width="484" height="41" fill="#a9a9a9" stroke="#555" stroke-width="2"/>
<text x="4" y="17" font-size="14" textLength="411" lengthAdjust="spacingAndGlyphs" fill="#111">ECMWF-INDEX-ANAL LCL-Height (m) Friday 14-11-2025 01:50</text>
<text x="4" y="37" font-size="14" textLength="474" lengthAdjust="spacingAndGlyphs" fill="#444">ECMWF-INDEX-ANAL WindShear_ (m/s) 0-1km Friday 14-11-2025 01:50</text>

<rect x="572" y="837" width="404" height="60" fill="#999"/>
<path d="M680 837L690 860L685 883L690 897" fill="none" stroke="#8aa0b8" stroke-width="1"/>
<path d="M843 867L867 890L867 897" fill="none" stroke="#d8c8a8" stroke-width="2"/>
<g font-size="12" text-anchor="middle" fill="#111">
<text x="640" y="857">ECMWF-INDEX-ANAL</text>
<text x="640" y="873">LCL-Height</text>
<text x="640" y="889">m</text>
</g>
<g stroke="#000" stroke-width="1">
<rect x="709.5" y="844.5" width="21" height="21.5" fill="#fff"/>
<rect x="730.5" y="844.5" width="21" height="21.5" fill="#a9a9ff"/>
<rect x="751.5" y="844.5" width="21" height="21.5" fill="#aa55ff"/>
<rect x="772.5" y="844.5" width="21" height="21.5" fill="#aa00ff"/>
<rect x="793.5" y="844.5" width="21" height="21.5" fill="#cc0088"/>
<rect x="814.5" y="844.5" width="21" height="21.5" fill="#ff0000"/>
<rect x="835.5" y="844.5" width="21" height="21.5" fill="#ffaa00"/>
<rect x="856.5" y="844.5" width="21" height="21.5" fill="#ffff00"/>
<rect x="877.5" y="844.5" width="21" height="21.5" fill="#aaff00"/>
<rect x="898.5" y="844.5" width="21" height="21.5" fill="#55aa00"/>
<rect x="919.5" y="844.5" width="21" height="21.5" fill="#00aa88"/>
<rect x="940.5" y="844.5" width="21" height="21.5" fill="#00aaff"/>
<path d="M730.5 866v9M772.5 866v9M814.5 866v9M856.5 866v9M898.5 866v9M940.5 866v9"/>
</g>
<g font-size="12" text-anchor="middle" fill="#111">
<text x="730" y="885">100</text><text x="772" y="885">400</text><text x="814" y="885">800</text><text x="856" y="885">1200</text><text x="898" y="885">1600</text><text x="940" y="885">2000</text>
</g>
</svg>
</body></html>
